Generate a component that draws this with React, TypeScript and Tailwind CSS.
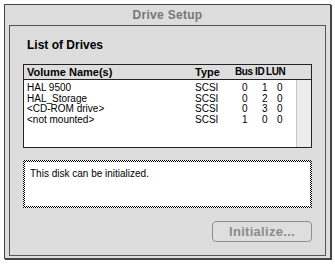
import React from "react";

const rows = [
  { name: "HAL 9500", type: "SCSI", bus: "0", id: "1", lun: "0" },
  { name: "HAL_Storage", type: "SCSI", bus: "0", id: "2", lun: "0" },
  { name: "<CD-ROM drive>", type: "SCSI", bus: "0", id: "3", lun: "0" },
  { name: "<not mounted>", type: "SCSI", bus: "1", id: "0", lun: "0" },
];

export default function App() {
  return (
    <div className="w-[335px] h-[264px] bg-white pt-[4px] pl-[4px] overflow-hidden font-['Liberation_Sans',Arial,sans-serif]">
      <div className="w-[327px] h-[255px] border border-[#444] bg-[#dddddd] shadow-[1px_1px_0_#444] flex flex-col">
        <div className="h-[20px] flex items-center justify-center text-[12px] font-bold text-[#777] tracking-[0.3px]">
          Drive Setup
        </div>
        <div className="mx-[4px] mb-[2px] flex-1 border border-[#555] flex flex-col">
          <div className="pl-[17px] pt-[12px] h-[38px] text-[12px] font-bold text-black leading-[14px]">
            List of Drives
          </div>
          <div className="ml-[13px] w-[289px] h-[84px] border border-[#222] flex flex-col">
            <div className="h-[15px] border-b border-[#222] flex items-center font-bold text-black leading-[14px]">
              <div className="w-[171px] pl-[3px] text-[11px]">Volume Name(s)</div>
              <div className="w-[40px] text-[11px]">Type</div>
              <div className="w-[20px] text-[10px] tracking-[-0.4px]">Bus</div>
              <div className="w-[11px] text-[10px] tracking-[-0.4px]">ID</div>
              <div className="text-[10px] tracking-[-0.4px]">LUN</div>
            </div>
            <div className="flex-1 flex">
              <div className="w-[272px] bg-white pt-[2px] text-[10px] text-black">
                {rows.map((r) => (
                  <div key={r.name} className="h-[10.67px] leading-[11px] flex">
                    <div className="w-[171px] pl-[3px] whitespace-pre">{r.name}</div>
                    <div className="w-[47px]">{r.type}</div>
                    <div className="w-[20px]">{r.bus}</div>
                    <div className="w-[15px]">{r.id}</div>
                    <div>{r.lun}</div>
                  </div>
                ))}
              </div>
              <div className="flex-1 bg-[#ececec] border-l border-[#c8c8c8]" />
            </div>
          </div>
          <div className="ml-[13px] mt-[12px] w-[289px] h-[48px] p-[2px] bg-[image:repeating-conic-gradient(#000_0_25%,#fff_0_50%)] bg-[length:2px_2px]">
            <div className="w-full h-full bg-white pl-[5px] pt-[6px] text-[10px] leading-[12px] text-black">
              This disk can be initialized.
            </div>
          </div>
          <div className="ml-[202px] mt-[13px] w-[100px] h-[21px] rounded-[4px] border border-[#8f8f8f] bg-[#dedede] flex items-center justify-center text-[13px] font-bold text-[#8c8c8c] tracking-[0.3px]">
            Initialize...
          </div>
        </div>
      </div>
    </div>
  );
}
